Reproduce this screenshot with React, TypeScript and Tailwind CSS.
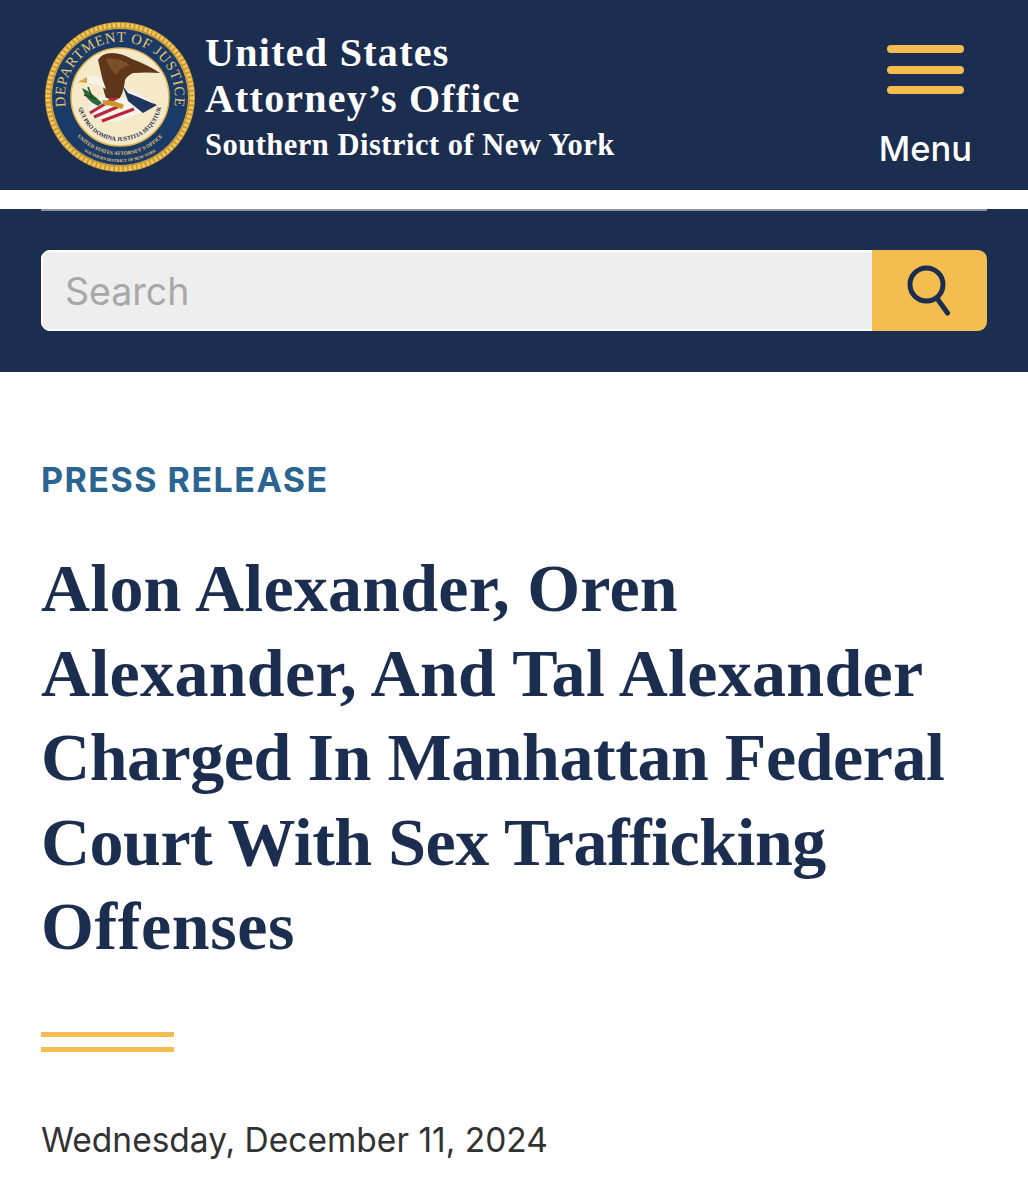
const navy = 'bg-[#1c2e4f]'

function Seal() {
  return (
    <svg width="152" height="152" viewBox="0 0 152 152" className="shrink-0">
      <defs>
        <path id="sealTop" d="M 26.2 99.2 A 55 55 0 1 1 125.8 99.2" />
        <path id="sealMotto" d="M 34 78 A 42 42 0 0 0 118 78" />
        <path id="sealBottom" d="M 23.4 100.5 A 58 58 0 0 0 128.6 100.5" />
        <path id="sealBottom2" d="M 26.2 117.8 A 65 65 0 0 0 125.8 117.8" />
      </defs>
      {/* rope border */}
      <circle cx="76" cy="76" r="75" fill="#c8922c" />
      <circle cx="76" cy="76" r="72" fill="none" stroke="#eec65e" strokeWidth="4.5" strokeDasharray="3 1.6" />
      <circle cx="76" cy="76" r="68.5" fill="#1a3a68" stroke="#d8a93f" strokeWidth="1" />
      <circle cx="76" cy="76" r="49" fill="#f5e9c9" stroke="#e3b64c" strokeWidth="1.5" />
      <text fill="#e8c670" fontSize="14.5" fontFamily="'Liberation Serif', serif" letterSpacing="0.7">
        <textPath href="#sealTop" startOffset="50%" textAnchor="middle">DEPARTMENT OF JUSTICE</textPath>
      </text>
      <text fill="#1c2e4f" fontSize="6" fontWeight="700" fontFamily="'Liberation Serif', serif">
        <textPath href="#sealMotto" startOffset="50%" textAnchor="middle">QUI PRO DOMINA JUSTITIA SEQUITUR</textPath>
      </text>
      <text fill="#e8c670" fontSize="5.2" fontWeight="700" fontFamily="'Liberation Serif', serif">
        <textPath href="#sealBottom" startOffset="50%" textAnchor="middle">UNITED STATES ATTORNEY'S OFFICE</textPath>
      </text>
      <text fill="#e8c670" fontSize="4.2" fontWeight="700" fontFamily="'Liberation Serif', serif">
        <textPath href="#sealBottom2" startOffset="50%" textAnchor="middle">SOUTHERN DISTRICT OF NEW YORK</textPath>
      </text>
      {/* flag shield */}
      <path d="M43 87 L61 71 L84 78 L98 91 Q80 100 66 101 Q52 98 43 87 Z" fill="#f7f3ea" />
      <path d="M46 92 L66 80 M50 96 L78 84 M58 100 L90 88" stroke="#b8283c" strokeWidth="3.2" fill="none" />
      <path d="M62 72 L76 77 L66 82 Z" fill="#b8283c" />
      {/* mountain and navy wedge */}
      <path d="M79 66 L92 74 L113 84 L99 92 L84 80 Z" fill="#1e3560" />
      <path d="M79 65 Q84 70 92 72 L104 78 L110 83 L94 76 L84 72 Z" fill="#f7f3ea" />
      {/* eagle */}
      <path d="M54 39 Q58 32 68 32 Q78 32 88 38 Q104 44 116 52 Q102 51 89 52 Q83 55 81 59 Q80 70 76 77 L62 77 Q58 66 58 56 Z" fill="#5e361a" />
      <path d="M62 38 Q74 36 86 44 Q76 46 72 54 Q66 48 62 38 Z" fill="#7d4f28" />
      <path d="M43 56 Q52 54 58 57 L62 68 Q52 62 43 62 Q40 59 43 56 Z" fill="#f7f3ea" />
      <path d="M43 56 L34 61 L43 62 Z" fill="#d8a93a" />
      {/* talons */}
      <path d="M58 79 L70 80 L80 84 L78 88 L68 85 L60 84 Z" fill="#c99a2e" />
      {/* olive branch */}
      <path d="M38 67 Q46 70 58 82 L54 85 Q42 80 38 67 Z" fill="#2d6a3a" />
      <path d="M44 66 L48 76 M40 74 L52 78" stroke="#1e4d2a" strokeWidth="1.6" />
    </svg>
  )
}

function SearchGlyph() {
  return (
    <svg width="46" height="54" viewBox="0 0 46 54" fill="none" stroke="#1c2e4f" strokeWidth="5" strokeLinecap="round">
      <circle cx="19.5" cy="20.5" r="16.5" />
      <line x1="30.5" y1="35" x2="40.5" y2="49" />
    </svg>
  )
}

export default function App() {
  return (
    <div className="w-[1028px] h-[1200px] bg-white overflow-hidden font-['Liberation_Sans',sans-serif]">
      <header className={`${navy} h-[190px] pl-[44px] pr-[56px] flex items-start justify-between`}>
        <div className="flex items-start pt-[21px] gap-[9px]">
          <Seal />
          <div className="text-white font-bold font-['Liberation_Serif',serif] pt-[9px]">
            <div className="text-[40px] leading-[46px] tracking-[1.3px]">United States</div>
            <div className="text-[40px] leading-[46px] tracking-[1.2px]">Attorney’s Office</div>
            <div className="text-[30.5px] leading-[36px] mt-[5px] tracking-[0.5px]">Southern District of New York</div>
          </div>
        </div>
        <button className="flex flex-col items-center pt-[45px]">
          <span className="flex flex-col gap-[12.5px]">
            <span className="block w-[77px] h-[8px] rounded-full bg-[#f4bd50]" />
            <span className="block w-[77px] h-[8px] rounded-full bg-[#f4bd50]" />
            <span className="block w-[77px] h-[8px] rounded-full bg-[#f4bd50]" />
          </span>
          <span className="text-white text-[34.5px] leading-[40px] mt-[35px] font-['Inter',sans-serif] font-medium">Menu</span>
        </button>
      </header>

      <div className="h-[19px] bg-white" />

      <section className={`${navy} h-[163px] px-[41px]`}>
        <div className="h-[2px] bg-[#8a92a3]" />
        <div className="mt-[39px] flex h-[81px] rounded-[9px] overflow-hidden">
          <div className="flex-1 bg-[#eeeeee] flex items-center pl-[22px] border-l-2 border-t-2 border-b-2 border-white">
            <span className="text-[#a8a8a8] text-[37.5px] leading-none font-['Inter',sans-serif] pt-[2px]">Search</span>
          </div>
          <div className="w-[115px] bg-[#f4bd50] flex items-center justify-center">
            <SearchGlyph />
          </div>
        </div>
      </section>

      <main className="px-[41px]">
        <p className="mt-[88px] text-[34px] leading-[40px] font-bold font-['Inter',sans-serif] text-[#2a6491] tracking-[1.5px]">PRESS RELEASE</p>
        <h1 className="mt-[46px] text-[#1c2e4f] font-bold font-['Liberation_Serif',serif] text-[68px] leading-[84.5px]">
          <span className="block tracking-[0.2px]">Alon Alexander, Oren</span>
          <span className="block tracking-[0.3px]">Alexander, And Tal Alexander</span>
          <span className="block tracking-[-0.45px]">Charged In Manhattan Federal</span>
          <span className="block tracking-[-0.5px]">Court With Sex Trafficking</span>
          <span className="block tracking-[0.6px]">Offenses</span>
        </h1>
        <div className="mt-[63px] w-[133px] flex flex-col gap-[10px]">
          <div className="h-[5px] bg-[#f4bd50]" />
          <div className="h-[5px] bg-[#f4bd50]" />
        </div>
        <p className="mt-[68px] text-[33.5px] leading-[40px] text-[#323232] font-['Inter',sans-serif]">Wednesday, December 11, 2024</p>
      </main>
    </div>
  )
}
